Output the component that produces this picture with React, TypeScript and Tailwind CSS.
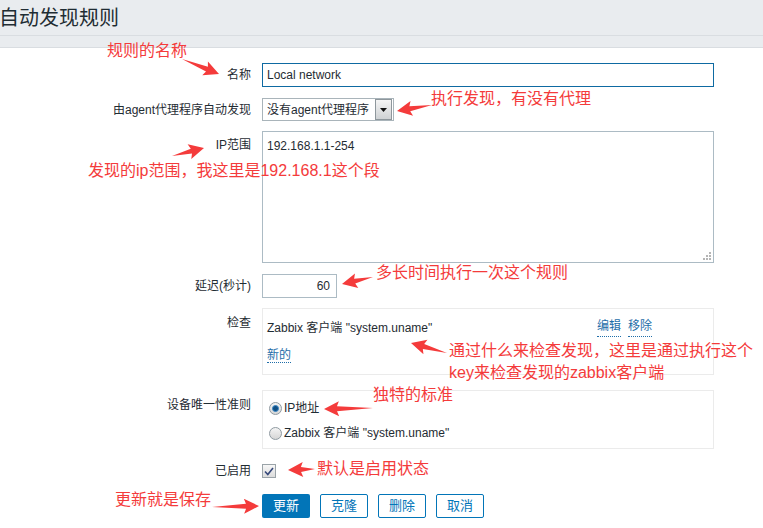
import React from 'react';

const FONT = { fontFamily: '"Liberation Sans", "Noto Sans CJK SC", sans-serif' };

// red hand-drawn style arrow, tail -> tip
const Arrow: React.FC<{ x1: number; y1: number; x2: number; y2: number }> = ({ x1, y1, x2, y2 }) => {
    const dx = x2 - x1;
    const dy = y2 - y1;
    const len = Math.sqrt(dx * dx + dy * dy);
    const angle = (Math.atan2(dy, dx) * 180) / Math.PI;
    const h = 15;
    const pts = `0,0 ${len - h + 2},-2.5 ${len - h},-7.5 ${len},0 ${len - h},7.5 ${len - h + 2},2.5`;
    return <polygon points={pts} fill="#f43b3b" transform={`translate(${x1} ${y1}) rotate(${angle})`} />;
};

const Note: React.FC<{ x: number; y: number; children: React.ReactNode }> = ({ x, y, children }) => (
    <div className="absolute text-[16px] leading-[22px] text-[#f43b3b] whitespace-nowrap" style={{ left: x, top: y }}>
        {children}
    </div>
);

const Label: React.FC<{ children: React.ReactNode; className?: string }> = ({ children, className = '' }) => (
    <div className={`w-[251px] shrink-0 text-right text-[12px] text-[#1f2c33] ${className}`}>{children}</div>
);

const Link: React.FC<{ children: React.ReactNode }> = ({ children }) => (
    <span className="text-[#1f6ea9] border-b border-dotted border-[#1f6ea9] leading-[14px]">{children}</span>
);

const Radio: React.FC<{ checked?: boolean }> = ({ checked }) => (
    <span className="w-[13px] h-[13px] rounded-full border border-[#8f9aa1] bg-gradient-to-b from-[#f4f4f4] to-[#d6d6d6] flex items-center justify-center">
        {checked && <span className="w-[7px] h-[7px] rounded-full bg-[#0f4f84] border border-[#3c88c6]" />}
    </span>
);

export default function App() {
    return (
        <div className="relative w-[763px] h-[528px] bg-white overflow-hidden" style={FONT}>
            {/* header */}
            <div className="h-[36px] bg-[#e9ecef] border-b border-[#d9dde1] flex items-center">
                <h1 className="ml-[-1px] text-[20px] text-[#1f2c33] font-normal leading-none">自动发现规则</h1>
            </div>
            <div className="h-[12px] bg-[#e9ecef] border-b border-[#d9dde1]" />

            {/* form */}
            <div className="flex flex-col pt-[15px]">
                <div className="flex items-center gap-[11px]">
                    <Label>名称</Label>
                    <div className="w-[452px] h-[24px] border border-[#0e6aa2] flex items-center px-[4px] text-[12px] text-[#1f2c33]">
                        Local network
                    </div>
                </div>

                <div className="flex items-center gap-[11px] mt-[11px]">
                    <Label>由agent代理程序自动发现</Label>
                    <div className="w-[132px] h-[23px] border border-[#a9b4ba] flex items-center text-[12px] text-[#1f2c33]">
                        <span className="flex-1 pl-[4px]">没有agent代理程序</span>
                        <span className="w-[17px] h-[21px] mr-[1px] border border-[#8e979c] bg-gradient-to-b from-[#f5f5f5] to-[#cfd2d4] flex items-center justify-center">
                            <svg width="7" height="4" viewBox="0 0 7 4"><polygon points="0,0 7,0 3.5,4" fill="#111" /></svg>
                        </span>
                    </div>
                </div>

                <div className="flex gap-[11px] mt-[10px]">
                    <Label className="pt-[5px]">IP范围</Label>
                    <div className="relative w-[452px] h-[132px] border border-[#acbbc4] px-[4px] pt-[5px] text-[12px] text-[#1f2c33]">
                        192.168.1.1-254
                        <svg className="absolute right-[2px] bottom-[2px]" width="8" height="8" viewBox="0 0 8 8">
                            <rect x="6" y="0" width="2" height="2" fill="#b5b5b5" />
                            <rect x="3" y="3" width="2" height="2" fill="#b5b5b5" />
                            <rect x="6" y="3" width="2" height="2" fill="#b5b5b5" />
                            <rect x="0" y="6" width="2" height="2" fill="#b5b5b5" />
                            <rect x="3" y="6" width="2" height="2" fill="#b5b5b5" />
                            <rect x="6" y="6" width="2" height="2" fill="#b5b5b5" />
                        </svg>
                    </div>
                </div>

                <div className="flex items-center gap-[11px] mt-[11px]">
                    <Label>延迟(秒计)</Label>
                    <div className="w-[75px] h-[24px] border border-[#acbbc4] flex items-center justify-end px-[6px] text-[12px] text-[#1f2c33]">
                        60
                    </div>
                </div>

                <div className="flex gap-[11px] mt-[10px]">
                    <Label className="pt-[6px]">检查</Label>
                    <div className="w-[452px] h-[67px] border border-[#ebebeb] px-[4px] pt-[10px] text-[12px] text-[#1f2c33]">
                        <div className="flex">
                            <span className="flex-1">Zabbix 客户端 "system.uname"</span>
                            <span className="flex gap-[7px] mr-[57px]">
                                <Link>编辑</Link>
                                <Link>移除</Link>
                            </span>
                        </div>
                        <div className="mt-[9px]">
                            <Link>新的</Link>
                        </div>
                    </div>
                </div>

                <div className="flex gap-[11px] mt-[15px]">
                    <Label className="pt-[6px]">设备唯一性准则</Label>
                    <div className="w-[452px] h-[59px] border border-[#ebebeb] px-[6px] pt-[8px] text-[12px] text-[#1f2c33] flex flex-col gap-[7px]">
                        <div className="flex items-center gap-[2px] h-[18px]">
                            <Radio checked />
                            <span>IP地址</span>
                        </div>
                        <div className="flex items-center gap-[2px] h-[18px]">
                            <Radio />
                            <span>Zabbix 客户端 "system.uname"</span>
                        </div>
                    </div>
                </div>

                <div className="flex items-center gap-[11px] mt-[15px] h-[14px]">
                    <Label>已启用</Label>
                    <span className="w-[14px] h-[14px] border border-[#9aa3a8] bg-gradient-to-b from-[#f7f7f7] to-[#dcdcdc] flex items-center justify-center">
                        <svg width="10" height="9" viewBox="0 0 10 9">
                            <path d="M1 4.5 L3.8 7.5 L9 1" fill="none" stroke="#36487a" strokeWidth="1.6" />
                        </svg>
                    </span>
                </div>

                <div className="flex items-center mt-[16px] pl-[262px] gap-[10px] text-[13px]">
                    <button className="w-[48px] h-[24px] rounded-[2px] bg-[#0275b8] text-white">更新</button>
                    <button className="w-[48px] h-[24px] rounded-[2px] border border-[#0275b8] text-[#0275b8]">克隆</button>
                    <button className="w-[48px] h-[24px] rounded-[2px] border border-[#0275b8] text-[#0275b8]">删除</button>
                    <button className="w-[48px] h-[24px] rounded-[2px] border border-[#0275b8] text-[#0275b8]">取消</button>
                </div>
            </div>

            {/* annotations */}
            <Note x={107} y={40}>规则的名称</Note>
            <Note x={431} y={88}>执行发现，有没有代理</Note>
            <Note x={88} y={160}>发现的ip范围，我这里是192.168.1这个段</Note>
            <Note x={376} y={262}>多长时间执行一次这个规则</Note>
            <Note x={449} y={340}>
                通过什么来检查发现，这里是通过执行这个
                <br />
                key来检查发现的zabbix客户端
            </Note>
            <Note x={373} y={384}>独特的标准</Note>
            <Note x={317} y={458}>默认是启用状态</Note>
            <Note x={115} y={489}>更新就是保存</Note>

            <svg className="absolute inset-0 pointer-events-none" width="763" height="528">
                <Arrow x1={182} y1={59} x2={219} y2={74} />
                <Arrow x1={432} y1={105} x2={397} y2={111} />
                <Arrow x1={172} y1={156} x2={204} y2={148} />
                <Arrow x1={373} y1={277} x2={342} y2={284} />
                <Arrow x1={447} y1={353} x2={411} y2={343} />
                <Arrow x1={373} y1={408} x2={324} y2={409} />
                <Arrow x1={315} y1={469} x2={288} y2={470} />
                <Arrow x1={212} y1={507} x2={259} y2={506} />
            </svg>
        </div>
    );
}
